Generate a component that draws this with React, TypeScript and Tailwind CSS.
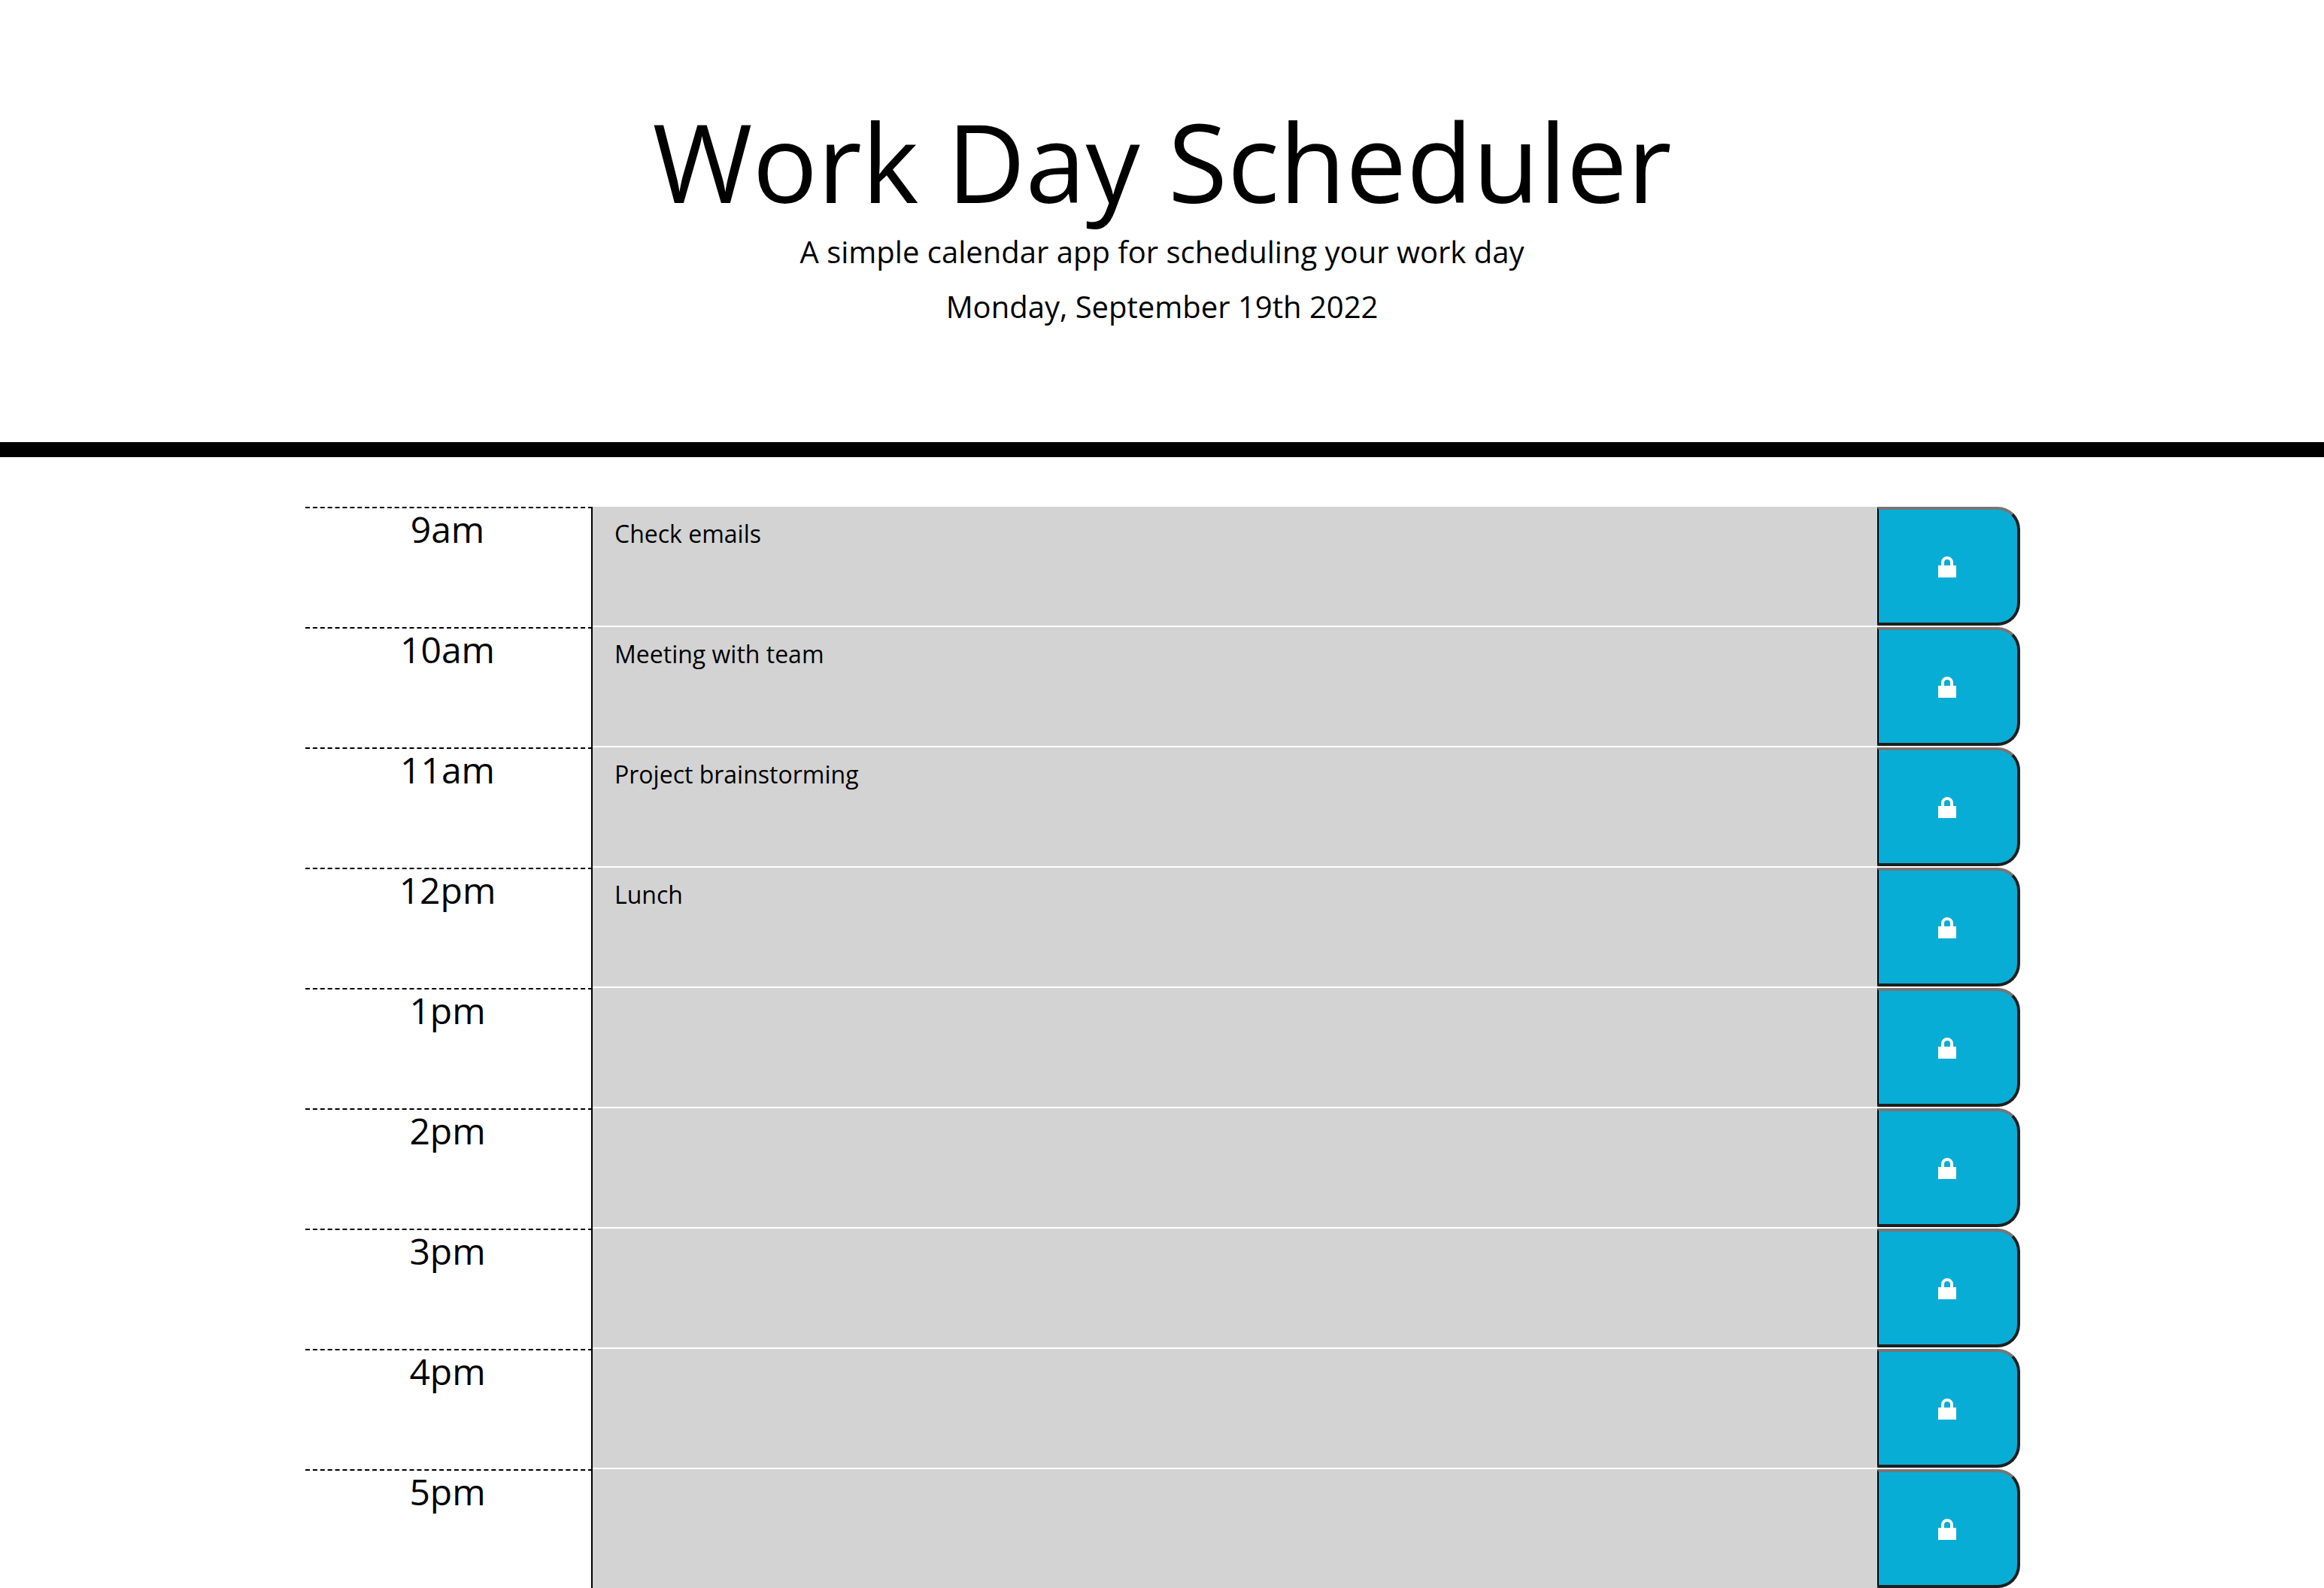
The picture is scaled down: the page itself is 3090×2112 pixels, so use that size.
const hours = [
  { label: '9am', task: 'Check emails' },
  { label: '10am', task: 'Meeting with team' },
  { label: '11am', task: 'Project brainstorming' },
  { label: '12pm', task: 'Lunch' },
  { label: '1pm', task: '' },
  { label: '2pm', task: '' },
  { label: '3pm', task: '' },
  { label: '4pm', task: '' },
  { label: '5pm', task: '' },
];

function LockIcon() {
  return (
    <svg width="24" height="28" viewBox="0 0 24 28" className="block fill-white">
      <path d="M0 12H4V8a8 8 0 0 1 16 0V12H24V28H0ZM8 12H16V8a4 4 0 0 0-8 0Z" fillRule="evenodd" />
    </svg>
  );
}

function TimeRow({ label, task }: { label: string; task: string }) {
  return (
    <div className="flex h-[158px]">
      <div className="w-[382px] border-t-2 border-r-2 border-t-black border-r-black border-dashed [border-right-style:solid] text-center text-[48px] leading-[56px] text-black pr-[2px] -mb-[2px]">
        {label}
      </div>
      <textarea
        readOnly
        defaultValue={task}
        className="flex-1 resize-none bg-[#d3d3d3] pl-[29px] pr-[30px] py-[16px] text-[32px] leading-[40px] text-black outline-none"
      />
      <button className="flex w-[190px] items-center justify-center rounded-tr-[30px] rounded-br-[30px] border-t-4 border-r-4 border-b-4 border-l-2 border-t-[#767676] border-r-[#1f1f1f] border-b-[#1f1f1f] border-l-black bg-[#08add6] pr-[2px] pt-[2px]">
        <LockIcon />
      </button>
    </div>
  );
}

export default function App() {
  return (
    <div className="h-screen overflow-hidden bg-white font-['Open_Sans',sans-serif] text-black">
      <header className="h-[608px] border-b-[20px] border-black pt-[128px] text-center">
        <h1 className="text-[144px] leading-[172px]">Work Day Scheduler</h1>
        <p className="text-[40px] leading-[60px] mt-[5px]">A simple calendar app for scheduling your work day</p>
        <p className="text-[40px] leading-[60px] mt-[13px]">Monday, September 19th 2022</p>
      </header>
      <div className="ml-[406px] mt-[66px] flex w-[2280px] flex-col gap-[2px]">
        {hours.map((h) => (
          <TimeRow key={h.label} label={h.label} task={h.task} />
        ))}
      </div>
    </div>
  );
}
